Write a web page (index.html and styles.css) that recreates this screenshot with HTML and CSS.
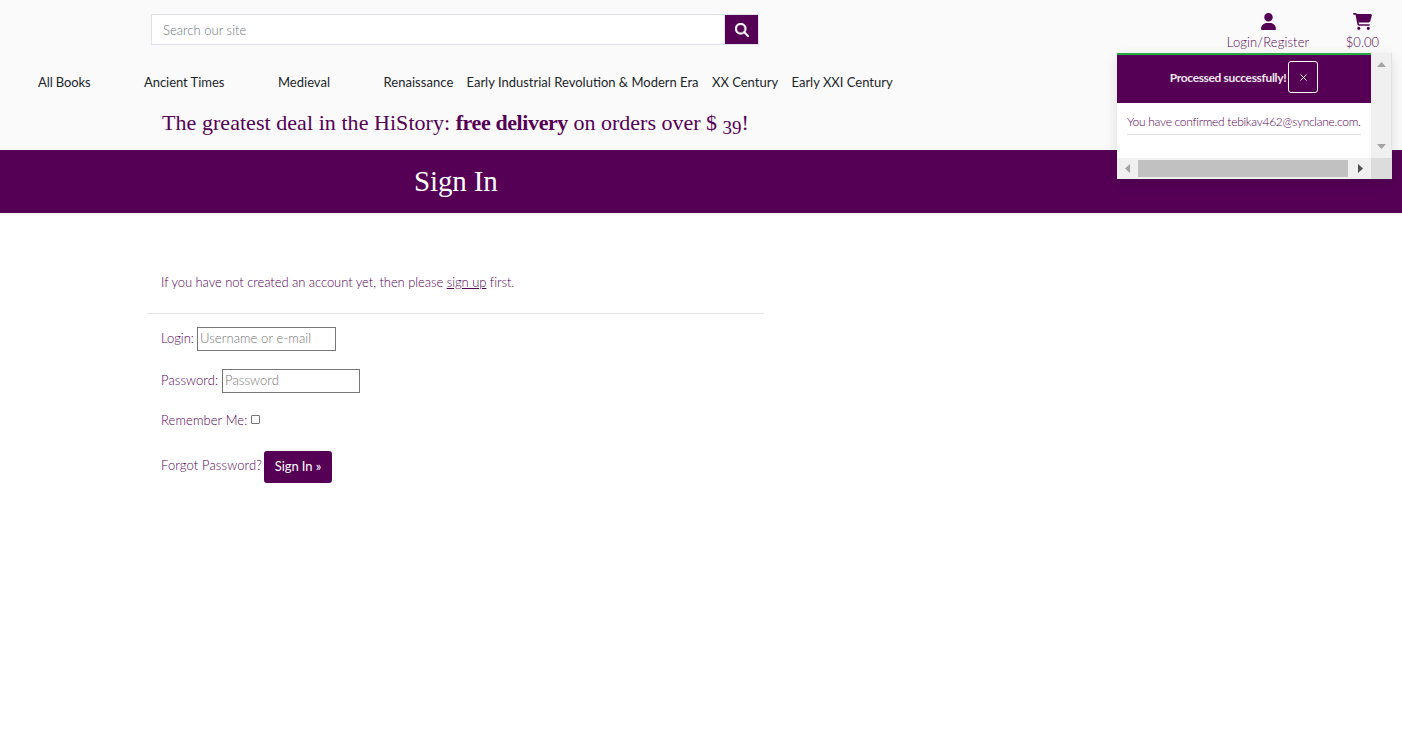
FILE: index.html
```html
<!DOCTYPE html>
<html lang="en">
<head>
<meta charset="utf-8">
<title>Sign In</title>
<link rel="stylesheet" href="styles.css">
</head>
<body>
<header class="header">
  <div class="topbar">
    <form class="search">
      <input class="search-input" type="text" placeholder="Search our site">
      <button class="search-button" type="button" aria-label="Search">
        <svg width="14" height="14" viewBox="0 0 512 512"><path fill="#fff" stroke="#fff" stroke-width="16" d="M416 208c0 45.900-14.900 88.300-40 122.700L502.600 457.400c12.500 12.500 12.500 32.800 0 45.300s-32.800 12.500-45.300 0L330.700 376c-34.400 25.200-76.800 40-122.700 40C93.100 416 0 322.900 0 208S93.100 0 208 0S416 93.100 416 208zM208 352a144 144 0 1 0 0-288 144 144 0 1 0 0 288z"/></svg>
      </button>
    </form>
    <div class="account">
      <a class="account-link login"><svg width="15" height="17" viewBox="0 0 448 512"><path fill="#505" d="M224 256A128 128 0 1 0 224 0a128 128 0 1 0 0 256zm-45.700 48C79.800 304 0 383.800 0 482.300C0 498.700 13.300 512 29.700 512H418.300c16.400 0 29.700-13.300 29.700-29.700C448 383.800 368.200 304 269.700 304H178.300z"/></svg><span class="login-text">Login/Register</span></a>
      <a class="account-link cart"><svg width="19" height="17" viewBox="0 0 576 512"><path fill="#505" d="M24 0C10.700 0 0 10.700 0 24s10.700 24 24 24H69.500c3.800 0 7.100 2.700 7.900 6.500l51.600 271c6.500 34 36.200 58.500 70.700 58.500H488c13.300 0 24-10.700 24-24s-10.700-24-24-24H199.700c-11.500 0-21.400-8.200-23.600-19.500L170.700 288H459.200c32.600 0 61.100-21.800 69.500-53.300l41-152.300C576.600 57 557.400 32 531.100 32H360 120.100C111 12.800 91.600 0 69.500 0H24zM176 512a48 48 0 1 0 0-96 48 48 0 1 0 0 96zm336-48a48 48 0 1 0-96 0 48 48 0 1 0 96 0z"/></svg><span class="cart-text">$0.00</span></a>
    </div>
  </div>
  <nav class="nav">
    <a class="nav-link n1">All Books</a>
    <a class="nav-link n2">Ancient Times</a>
    <a class="nav-link n3">Medieval</a>
    <a class="nav-link n4">Renaissance</a>
    <a class="nav-link n5">Early Industrial Revolution &amp; Modern Era</a>
    <a class="nav-link n6">XX Century</a>
    <a class="nav-link n7">Early XXI Century</a>
  </nav>
  <p class="promo"><span class="promo-lead">The greatest deal in the HiStory:</span> <b class="promo-strong">free delivery</b> on orders over $ <span class="oldstyle">39</span>!</p>
</header>
<div class="banner"><h1 class="title">Sign In</h1></div>
<main class="content">
  <p class="intro">If you have not created an account yet, then please <a class="signup">sign up</a> first.</p>
  <form class="form">
    <div class="row login-row"><label class="label l1">Login:</label><input class="field" type="text" placeholder="Username or e-mail"></div>
    <div class="row password-row"><label class="label l2">Password:</label><input class="field password" type="text" placeholder="Password"></div>
    <div class="row remember-row"><label class="label l3">Remember Me:</label><input class="check" type="checkbox"></div>
    <div class="row submit-row"><a class="label l4">Forgot Password?</a><button class="submit" type="button">Sign In »</button></div>
  </form>
</main>
<aside class="toast">
  <div class="toast-view">
    <div class="toast-head"><span class="toast-title">Processed successfully!</span><button class="toast-close" type="button" aria-label="Close"><svg width="7" height="7" viewBox="0 0 7 7"><path d="M.5.5l6 6M6.500.5l-6 6" stroke="#fff"/></svg></button></div>
    <div class="toast-body"><p class="toast-message">You have confirmed tebikav462@synclane.com.</p></div>
  </div>
  <div class="vbar">
    <svg width="9" height="5" viewBox="0 0 9 5"><path fill="#a3a3a3" d="M0 5L4.500 0L9 5z"/></svg>
    <svg width="9" height="5" viewBox="0 0 9 5"><path fill="#a3a3a3" d="M0 0L4.500 5L9 0z"/></svg>
  </div>
  <div class="hbar">
    <svg width="5" height="9" viewBox="0 0 5 9"><path fill="#a3a3a3" d="M5 0L0 4.500L5 9z"/></svg>
    <div class="thumb"></div>
    <svg width="5" height="9" viewBox="0 0 5 9"><path fill="#505050" d="M0 0L5 4.500L0 9z"/></svg>
  </div>
  <div class="corner"></div>
</aside>
</body>
</html>
```
FILE: styles.css
```css
* { box-sizing: border-box; }
body { margin: 0; background: #fff; color: #505; font: 300 13px/20px Lato, sans-serif; height: 730px; overflow: hidden; }
p, h1 { margin: 0; font-weight: inherit; }
a, span, label { white-space: nowrap; }
svg { display: block; flex: none; }
input, button { font-family: inherit; margin: 0; border-radius: 0; }

.header { height: 150px; background: #fafafa; }
.topbar { display: flex; justify-content: space-between; height: 71px; padding: 13px 23px 0 151px; }
.search { display: flex; width: 608px; height: 31px; margin-top: 1px; border: 1px solid #dee2e6; }
.search-input { flex: 1; border: 0; padding: 1px 11px; font-size: 13px; font-weight: 300; background: #fff; outline: 0; }
.search-input::placeholder { color: #6c757d; opacity: 1; letter-spacing: .03px; }
.search-button { width: 34px; border: 0; border-left: 1px solid #dee2e6; padding: 0; background: #505; display: flex; align-items: center; justify-content: center; }
.account { display: flex; gap: 36.500px; }
.account-link { display: flex; flex-direction: column; align-items: center; gap: 2px; }
.login-text { letter-spacing: .13px; }

.nav { display: flex; height: 22px; padding-left: 38px; color: #212529; font-weight: 400; }
.nav-link { line-height: 22px; }
.n1 { width: 106px; letter-spacing: -.1px; }
.n2 { width: 134px; letter-spacing: -.05px; }
.n3 { width: 105.500px; }
.n4 { width: 83px; letter-spacing: .04px; }
.n5 { width: 245.500px; }
.n6 { width: 79.500px; }
.promo { padding: 15px 0 0 162px; font: 400 22px/30px "Liberation Serif", serif; white-space: nowrap; height: 45px; }
.promo-lead { letter-spacing: .05px; }
.promo-strong { font-weight: 700; letter-spacing: -.4px; }
.oldstyle { display: inline-block; font-size: 19px; line-height: 19px; vertical-align: -4px; }

.banner { height: 63px; padding: 14px 0 0 414px; background: #505; }
.title { color: #fff; font: 400 29px/34px "Liberation Serif", serif; letter-spacing: -.15px; }

.content { padding: 0 0 0 147px; }
.intro { width: 617px; height: 101px; padding: 59px 0 0 14px; border-bottom: 1px solid #e5e5e5; white-space: nowrap; letter-spacing: -.06px; }
.signup { text-decoration: underline; }
.form { padding: 13px 0 0 14px; }
.row { display: flex; }
.login-row, .password-row { height: 24px; margin-bottom: 18px; }
.label { line-height: 22px; }
.l1 { width: 36px; }
.l2 { width: 61px; letter-spacing: .1px; }
.l3 { width: 90px; line-height: 18px; letter-spacing: .1px; }
.l4 { width: 103px; line-height: 28px; letter-spacing: .13px; }
.field { width: 139px; height: 24px; border: 1px solid #767676; padding: 0 2px 2px; font-size: 13px; font-weight: 300; }
.password { width: 138px; }
.field::placeholder { color: #757575; opacity: 1; letter-spacing: .1px; }
.remember-row { height: 40px; }
.check { width: 9px; height: 9px; margin-top: 4px; appearance: none; border: 1px solid #767676; border-radius: 1px; }
.submit { width: 68px; height: 32px; border: 0; border-radius: 3px; background: #505; color: #fff; padding: 0 0 2px; font-size: 13px; font-weight: 400; letter-spacing: -.1px; white-space: nowrap; }

.toast { position: absolute; left: 1117px; top: 53px; display: grid; grid-template-columns: 254px 21px; grid-template-rows: 105px 21px; background: #fff; box-shadow: 0 4px 12px rgba(0,0,0,.12); }
.toast-head { height: 50px; border-top: 2px solid #28a745; background: #505; color: #fff; display: flex; align-items: center; justify-content: center; gap: 2px; padding-bottom: 4px; }
.toast-title { font-size: 12px; font-weight: 700; opacity: .9; letter-spacing: -.35px; padding-top: 2px; }
.toast-close { width: 30px; height: 32px; border: 1px solid #fff; border-radius: 3px; background: #505; display: flex; align-items: center; justify-content: center; padding: 0; }
.toast-body { padding: 9px 10px 0; }
.toast-message { height: 23px; border-bottom: 1px solid #dee2e6; font-size: 12px; letter-spacing: -.28px; white-space: nowrap; }
.vbar { background: #f0f0f0; border-right: 1px solid #e4e4e4; display: flex; flex-direction: column; align-items: center; justify-content: space-between; padding: 9px 0; }
.hbar { background: #f0f0f0; display: flex; align-items: center; justify-content: space-between; padding: 0 8px; }
.thumb { width: 210px; height: 17px; margin-right: 3px; background: #c1c1c1; }
.corner { background: #dcdcdc; }
```
